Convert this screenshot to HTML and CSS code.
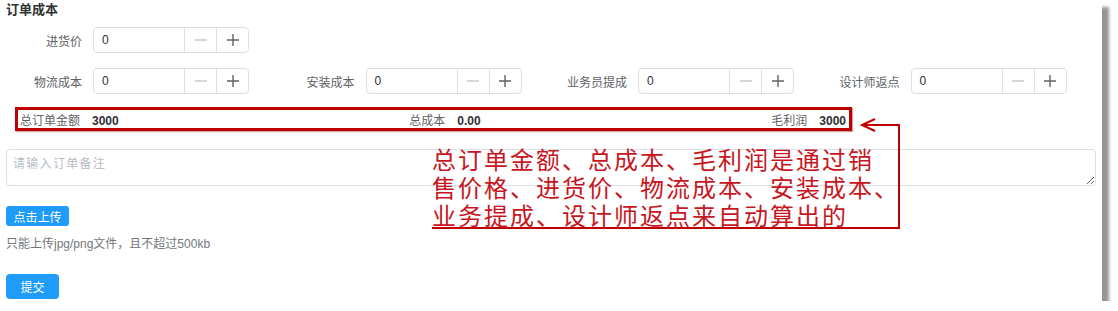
FILE: index.html
```
<!DOCTYPE html>
<html lang="zh-CN">
<head>
  <meta charset="UTF-8" />
  <meta name="viewport" content="width=device-width, initial-scale=1.0" />
  <title>订单成本</title>
  <link rel="stylesheet" href="styles.css">
</head>
<body>
  <div class="frame">
    <h3 class="title">订单成本</h3>

    <div class="form-row">
      <div class="field">
        <label>进货价</label>
        <div class="num-input">
          <span class="num-value">0</span>
          <span class="num-btn minus"><svg width="12" height="12" viewBox="0 0 12 12"><path d="M0 6h12" /></svg></span>
          <span class="num-btn plus"><svg width="12" height="12" viewBox="0 0 12 12"><path d="M0 6h12M6 0v12" /></svg></span>
        </div>
      </div>
    </div>

    <div class="form-row">
      <div class="field">
        <label>物流成本</label>
        <div class="num-input">
          <span class="num-value">0</span>
          <span class="num-btn minus"><svg width="12" height="12" viewBox="0 0 12 12"><path d="M0 6h12" /></svg></span>
          <span class="num-btn plus"><svg width="12" height="12" viewBox="0 0 12 12"><path d="M0 6h12M6 0v12" /></svg></span>
        </div>
      </div>
      <div class="field">
        <label>安装成本</label>
        <div class="num-input">
          <span class="num-value">0</span>
          <span class="num-btn minus"><svg width="12" height="12" viewBox="0 0 12 12"><path d="M0 6h12" /></svg></span>
          <span class="num-btn plus"><svg width="12" height="12" viewBox="0 0 12 12"><path d="M0 6h12M6 0v12" /></svg></span>
        </div>
      </div>
      <div class="field">
        <label>业务员提成</label>
        <div class="num-input">
          <span class="num-value">0</span>
          <span class="num-btn minus"><svg width="12" height="12" viewBox="0 0 12 12"><path d="M0 6h12" /></svg></span>
          <span class="num-btn plus"><svg width="12" height="12" viewBox="0 0 12 12"><path d="M0 6h12M6 0v12" /></svg></span>
        </div>
      </div>
      <div class="field">
        <label>设计师返点</label>
        <div class="num-input">
          <span class="num-value">0</span>
          <span class="num-btn minus"><svg width="12" height="12" viewBox="0 0 12 12"><path d="M0 6h12" /></svg></span>
          <span class="num-btn plus"><svg width="12" height="12" viewBox="0 0 12 12"><path d="M0 6h12M6 0v12" /></svg></span>
        </div>
      </div>
    </div>

    <div class="totals">
      <div class="total"><span class="total-label">总订单金额</span><b>3000</b></div>
      <div class="total"><span class="total-label">总成本</span><b>0.00</b></div>
      <div class="total"><span class="total-label">毛利润</span><b>3000</b></div>
    </div>

    <textarea class="remark" placeholder="请输入订单备注"></textarea>

    <button class="btn btn-small">点击上传</button>
    <p class="tip">只能上传jpg/png文件，且不超过500kb</p>
    <button class="btn btn-submit">提交</button>

    <!-- annotation over the form -->
    <div class="note">
      <div class="note-line">总订单金额、总成本、毛利润是通过销</div>
      <div class="note-line">售价格、进货价、物流成本、安装成本、</div>
      <div class="note-line">业务提成、设计师返点来自动算出的</div>
    </div>
    <svg class="note-arrow" width="1102" height="301" viewBox="0 0 1102 301">
      <path d="M863 125H899V228H432" fill="none" stroke="#c00000" stroke-width="2" />
      <path d="M875 119L862 125L875 131" fill="none" stroke="#c00000" stroke-width="2" />
    </svg>
  </div>
</body>
</html>
```

FILE: styles.css
```
body {
  margin: 0;
  background: #fff;
  font-family: "Liberation Sans", "Noto Sans CJK SC", sans-serif;
  color: #606266;
}
.frame {
  position: relative;
  width: 1102px;
  height: 301px;
  box-sizing: border-box;
  padding: 0 6px;
  background: #fff;
  box-shadow: 7px 7px 3px rgba(0, 0, 0, 0.42);
}
.title {
  margin: 0;
  padding-top: 1px;
  font-size: 13px;
  line-height: 18px;
  font-weight: bold;
  color: #303133;
}
.form-row {
  display: flex;
  margin-top: 8px;
  padding-left: 4px;
  height: 26px;
}
.form-row + .form-row {
  margin-top: 15px;
}
.field {
  display: flex;
  align-items: center;
  width: 272.5px;
  flex-shrink: 0;
}
.field label {
  width: 83px;
  box-sizing: border-box;
  padding-right: 11px;
  text-align: right;
  font-size: 12px;
  color: #606266;
}
.num-input {
  display: flex;
  width: 156px;
  height: 26px;
  box-sizing: border-box;
  border: 1px solid #dcdfe6;
  border-radius: 4px;
}
.num-value {
  flex: 1;
  padding-left: 8px;
  font-size: 12px;
  line-height: 24px;
  color: #303133;
}
.num-btn {
  width: 31px;
  display: flex;
  align-items: center;
  justify-content: center;
  border-left: 1px solid #dcdfe6;
}
.num-btn path {
  stroke-width: 1.4;
}
.minus path {
  stroke: #c0c4cc;
}
.plus path {
  stroke: #606266;
}
.totals {
  display: flex;
  justify-content: space-between;
  align-items: center;
  margin: 13px 0 0 9px;
  width: 837px;
  height: 24px;
  box-sizing: border-box;
  padding: 0 3px 0 2px;
  border: 3px solid #c00000;
  box-shadow: 1px 1px 1px rgba(120, 0, 0, 0.35);
  font-size: 12px;
}
.total b {
  color: #303133;
}
.total-label {
  margin-right: 12px;
  color: #606266;
}
.remark {
  display: block;
  margin-top: 18px;
  width: 1090px;
  height: 37px;
  box-sizing: border-box;
  padding: 4px 6px;
  border: 1px solid #dcdfe6;
  border-radius: 4px;
  font-family: "Liberation Sans", "Noto Sans CJK SC", sans-serif;
  font-size: 12px;
  letter-spacing: 1.3px;
  color: #606266;
}
.remark::placeholder {
  color: #b8bcc4;
}
.btn {
  display: block;
  border: none;
  color: #fff;
  background: #1f9bfb;
  font-family: "Liberation Sans", "Noto Sans CJK SC", sans-serif;
  font-size: 12px;
  padding: 0;
}
.btn-small {
  margin-top: 20px;
  width: 63px;
  height: 20px;
  border-radius: 3px;
}
.tip {
  margin: 11px 0 0;
  font-size: 12px;
  line-height: 14px;
  color: #75777d;
}
.btn-submit {
  margin-top: 23px;
  width: 53px;
  height: 25px;
  border-radius: 4px;
  font-size: 12px;
}
.note {
  position: absolute;
  left: 432px;
  top: 145px;
  font-family: "Noto Sans CJK SC", sans-serif;
  font-size: 24px;
  letter-spacing: 2px;
  color: #c8161e;
}
.note-line {
  height: 28px;
  line-height: 28px;
  white-space: nowrap;
}
.note-arrow {
  position: absolute;
  left: 0;
  top: 0;
  pointer-events: none;
}
```
